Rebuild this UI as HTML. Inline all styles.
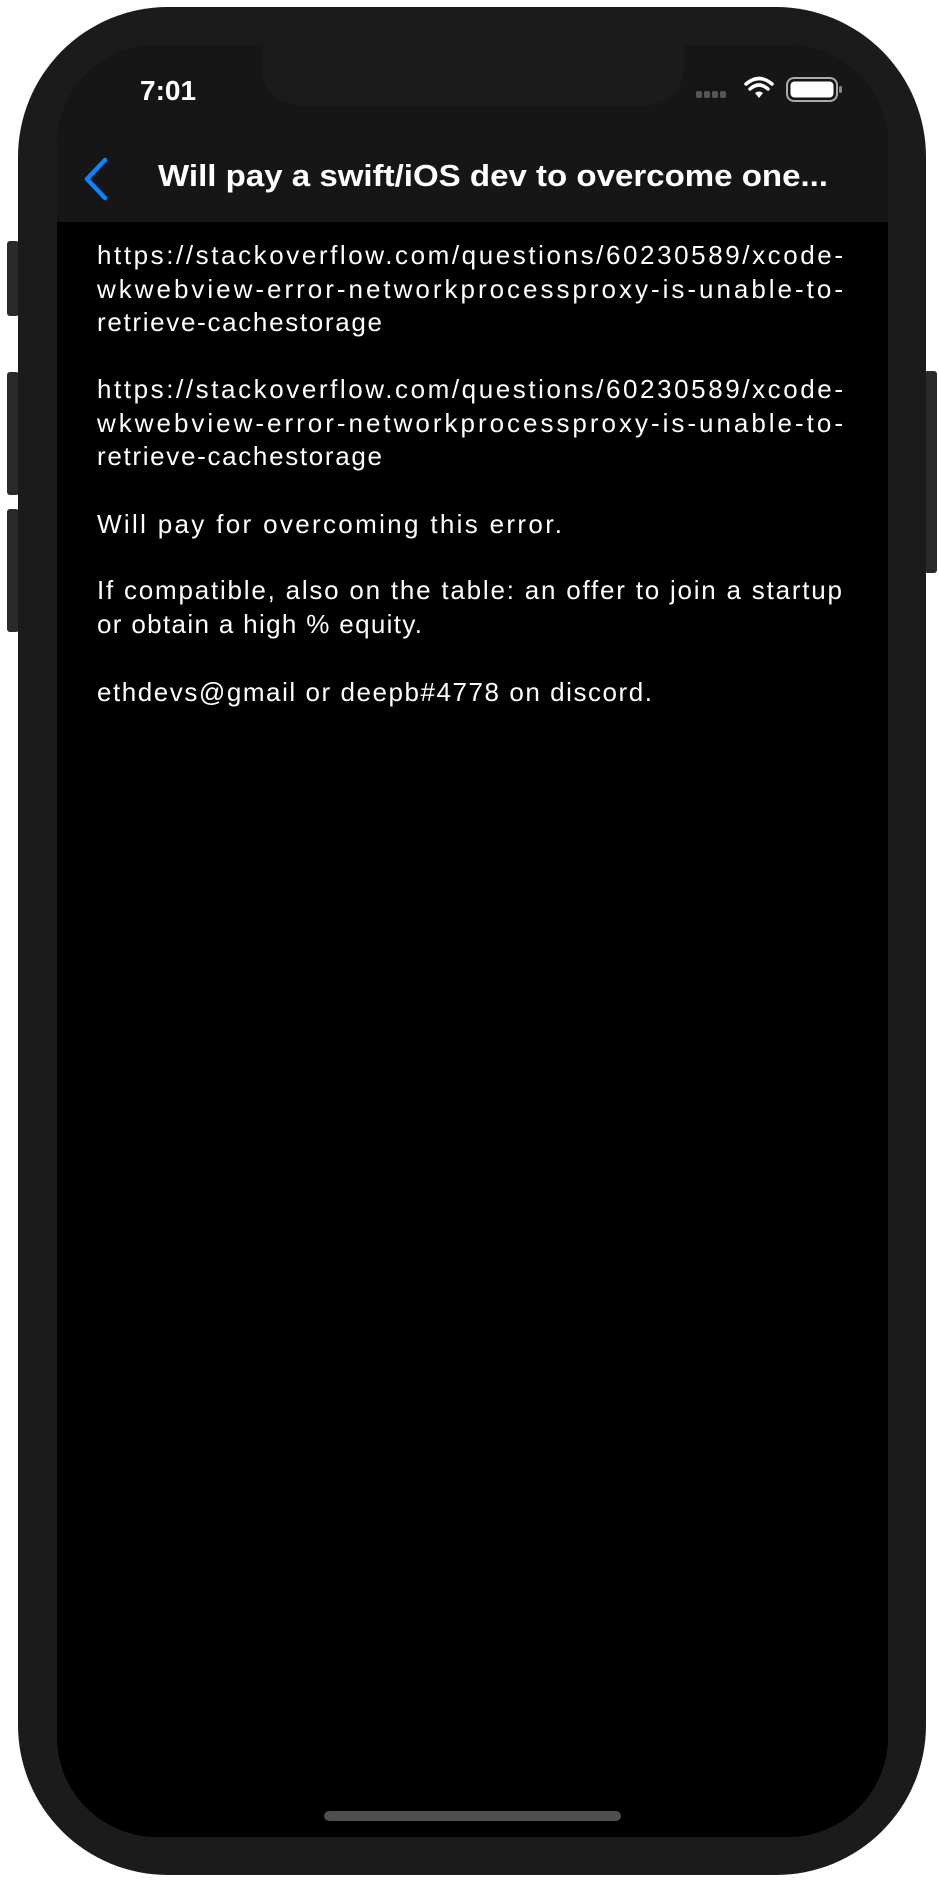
<!DOCTYPE html>
<html><head><style>
body{margin:0;width:939px;height:1883px;background:#fff;position:relative;overflow:hidden;font-family:"Liberation Sans",sans-serif}
.btn{position:absolute;background:#2a2a2a;border-radius:3px}
.phone{position:absolute;left:18px;top:7px;width:908px;height:1868px;background:#1b1b1b;border-radius:150px}
.screen{position:absolute;left:57px;top:45px;width:831px;height:1792px;background:#000;border-radius:100px;overflow:hidden}
.nav{position:absolute;left:0;top:0;width:831px;height:177px;background:#161616}
.notch{position:absolute;left:205px;top:0;width:422px;height:60px;background:#1b1b1b;border-radius:0 0 36px 36px}
.time{position:absolute;left:83px;top:30px;color:#fff;font-size:28px;font-weight:bold}
.home{position:absolute;left:267px;top:1766px;width:297px;height:10px;background:#4f4f4f;border-radius:5px}
svg text{font-family:"Liberation Sans",sans-serif;fill:#fff}
</style></head><body>
<div class="btn" style="left:7px;top:241px;width:12px;height:75px"></div>
<div class="btn" style="left:7px;top:372px;width:12px;height:123px"></div>
<div class="btn" style="left:7px;top:509px;width:12px;height:123px"></div>
<div class="btn" style="left:924px;top:371px;width:13px;height:202px"></div>
<div class="phone"></div>
<div class="screen">
<div class="nav"></div>
<div class="notch"></div>
<div class="time">7:01</div>
<svg style="position:absolute;left:626px;top:30px" width="170" height="30" viewBox="0 0 170 30">
<g fill="#555"><rect x="13" y="16" width="6" height="7" rx="2"/><rect x="21" y="16" width="6" height="7" rx="2"/><rect x="29" y="16" width="6" height="7" rx="2"/><rect x="37" y="16" width="6" height="7" rx="2"/></g>
<g fill="none" stroke="#fff" stroke-width="3.5" stroke-linecap="round"><path d="M63 9 Q76 -2 89 9"/><path d="M67 14 Q76 6 85 14"/></g>
<path d="M72 18 L76 23 L80 18 Q76 15 72 18Z" fill="#fff"/>
<rect x="104" y="3" width="50" height="23" rx="7" fill="none" stroke="#aaa" stroke-width="2"/>
<rect x="107.5" y="6.5" width="43" height="16" rx="4" fill="#fff"/>
<rect x="156" y="11" width="3" height="7" rx="1.5" fill="#888"/>
</svg>
<svg style="position:absolute;left:24px;top:112px" width="30" height="44" viewBox="0 0 30 44"><path d="M24 3 L6 22 L24 41" fill="none" stroke="#0a84ff" stroke-width="4.5" stroke-linecap="round" stroke-linejoin="round"/></svg>
<div class="home"></div>
</div>
<svg style="position:absolute;left:0;top:0" width="939" height="800">
<text x="158" y="186" font-size="31" font-weight="bold" textLength="670" lengthAdjust="spacingAndGlyphs">Will pay a swift/iOS dev to overcome one...</text>
<g font-size="26" lengthAdjust="spacingAndGlyphs">
<text x="97" y="264" textLength="746">https://stackoverflow.com/questions/60230589/xcode-</text>
<text x="97" y="298" textLength="746">wkwebview-error-networkprocessproxy-is-unable-to-</text>
<text x="97" y="331" textLength="285">retrieve-cachestorage</text>
<text x="97" y="398" textLength="746">https://stackoverflow.com/questions/60230589/xcode-</text>
<text x="97" y="432" textLength="746">wkwebview-error-networkprocessproxy-is-unable-to-</text>
<text x="97" y="465" textLength="285">retrieve-cachestorage</text>
<text x="97" y="533" textLength="465">Will pay for overcoming this error.</text>
<text x="97" y="599" textLength="745">If compatible, also on the table: an offer to join a startup</text>
<text x="97" y="633" textLength="325">or obtain a high % equity.</text>
<text x="97" y="701" textLength="555">ethdevs@gmail or deepb#4778 on discord.</text>
</g>
</svg>
</body></html>
